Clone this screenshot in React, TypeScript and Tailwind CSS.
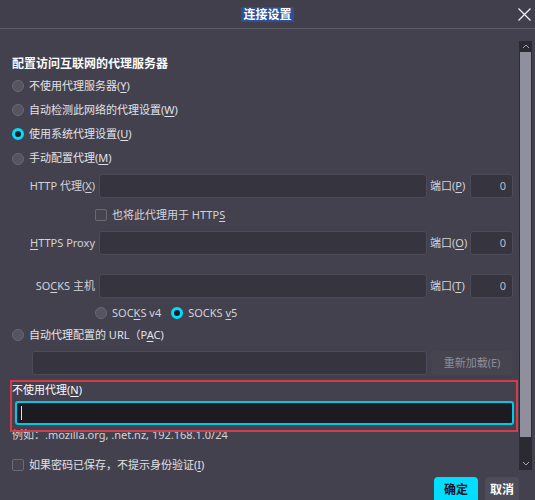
import type { ReactNode } from "react";

const font = { fontFamily: '"Noto Sans", "Noto Sans CJK SC", sans-serif' };

function Radio({ checked = false }: { checked?: boolean }) {
	return checked ? (
		<span className="w-[12px] h-[12px] shrink-0 rounded-full border-[3px] border-[#00ddff] bg-[#1c1b22]" />
	) : (
		<span className="w-[12px] h-[12px] shrink-0 rounded-full border border-[#6a6975] bg-[#55545f]" />
	);
}

function Checkbox() {
	return <span className="w-[12px] h-[12px] shrink-0 rounded-[2px] border border-[#6a6975] bg-[#45444f]" />;
}

function Key({ children }: { children: ReactNode }) {
	return <span className="underline underline-offset-2">{children}</span>;
}

function Field({ className = "", value }: { className?: string; value?: string }) {
	return (
		<div className={`h-[24px] shrink-0 rounded-[3px] border border-[#4c4b57] bg-[#35343f] flex items-center justify-end pr-[6px] text-[11px] text-[#bdbcc4] ${className}`}>
			{value}
		</div>
	);
}

function ProxyRow({ label, port, inputClass = "w-[328px]" }: { label: ReactNode; port: ReactNode; inputClass?: string }) {
	return (
		<div className="flex items-center h-[24px]">
			<div className="w-[99px] shrink-0 pr-[4px] text-right text-[11px] text-[#d4d3da]">{label}</div>
			<Field className={inputClass} />
			<div className="w-[43px] shrink-0 pl-[3px] text-[11px] text-[#d4d3da] whitespace-nowrap">{port}</div>
			<Field className="w-[43px]" value="0" />
		</div>
	);
}

export default function App() {
	return (
		<div className="w-[535px] h-[500px] bg-[#42414d] overflow-hidden flex flex-col text-[#e2e1e8]" style={font}>
			{/* Title bar */}
			<div className="relative h-[29px] shrink-0 flex items-center justify-center border-b border-[#5c5b67] bg-[#403f4b]">
				<span className="px-[2px] bg-[#2a4f9c] text-[12px] font-bold leading-[15px] text-white">连接设置</span>
				<svg className="absolute right-[3px] top-[7px]" width="15" height="15" viewBox="0 0 15 15">
					<path d="M1.5 1.5 L13.5 13.5 M13.5 1.5 L1.5 13.5" stroke="#f0f0f4" strokeWidth="1.3" fill="none" />
				</svg>
			</div>

			{/* Scrollable body */}
			<div className="flex h-[443px] shrink-0">
				<div className="relative w-[519px] shrink-0">
					<div className="mt-[27px] ml-[12px] h-[16px] leading-[16px] text-[12px] font-bold text-[#fbfbfe]">配置访问互联网的代理服务器</div>

					<div className="mt-[2px] flex flex-col text-[11px]">
						<label className="h-[24px] flex items-center gap-[5px] pl-[12px]">
							<Radio />
							<span>不使用代理服务器(<Key>Y</Key>)</span>
						</label>
						<label className="h-[24px] flex items-center gap-[5px] pl-[12px]">
							<Radio />
							<span>自动检测此网络的代理设置(<Key>W</Key>)</span>
						</label>
						<label className="h-[24px] flex items-center gap-[5px] pl-[12px]">
							<Radio checked />
							<span>使用系统代理设置(<Key>U</Key>)</span>
						</label>
						<label className="h-[25px] flex items-center gap-[5px] pl-[12px]">
							<Radio />
							<span>手动配置代理(<Key>M</Key>)</span>
						</label>
					</div>

					<div className="mt-[3px]">
						<ProxyRow
							label={<>HTTP 代理(<Key>X</Key>)</>}
							port={<>端口(<Key>P</Key>)</>}
						/>
					</div>

					<div className="mt-[5px] h-[24px] flex items-center gap-[5px] pl-[95px] text-[11px] text-[#d4d3da]">
						<Checkbox />
						<span>也将此代理用于 HTTP<Key>S</Key></span>
					</div>

					<div className="mt-[4px]">
						<ProxyRow
							label={<><Key>H</Key>TTPS Proxy</>}
							port={<>端口(<Key>O</Key>)</>}
						/>
					</div>

					<div className="mt-[19px]">
						<ProxyRow
							label={<>SO<Key>C</Key>KS 主机</>}
							port={<>端口(<Key>T</Key>)</>}
						/>
					</div>

					<div className="mt-[4px] h-[22px] flex items-center pl-[95px] text-[11px] text-[#d4d3da]">
						<Radio />
						<span className="ml-[5px]">SOC<Key>K</Key>S v4</span>
						<span className="ml-[10px] flex items-center"><Radio checked /></span>
						<span className="ml-[5px]">SOCKS <Key>v</Key>5</span>
					</div>

					<label className="h-[22px] flex items-center gap-[5px] pl-[12px] text-[11px]">
						<Radio />
						<span>自动代理配置的 URL（P<Key>A</Key>C)</span>
					</label>

					<div className="mt-[5px] flex items-center h-[24px] pl-[32px]">
						<Field className="w-[395px]" />
						<div className="ml-[4px] w-[82px] h-[24px] rounded-[3px] bg-[#45444f] flex items-center justify-center text-[11px] text-[#8f8e98]">
							重新加载(E)
						</div>
					</div>

					<div className="mt-[7px] pl-[12px] h-[16px] leading-[16px] text-[11px] text-[#fbfbfe]">不使用代理(<Key>N</Key>)</div>
					<div className="mt-[3px] ml-[15px] w-[499px] h-[24px] rounded-[3px] border-2 border-[#00c8e6] bg-[#1c1b22] flex items-center pl-[4px]">
						<span className="w-px h-[14px] bg-[#e0e0e6]" />
					</div>
					<div className="mt-[2px] pl-[12px] h-[16px] leading-[16px] text-[11px] text-[#d4d3da]">例如：.mozilla.org, .net.nz, 192.168.1.0/24</div>

					<div className="mt-[10px] h-[24px] flex items-center gap-[5px] pl-[12px] text-[11px]">
						<Checkbox />
						<span>如果密码已保存，不提示身份验证(<Key>I</Key>)</span>
					</div>

					{/* annotation box */}
					<div className="absolute left-[10px] top-[351px] w-[508px] h-[52px] border-2 border-[#d83a48] pointer-events-none" />
				</div>

				{/* Scrollbar */}
				<div className="mt-[12px] w-[13px] h-[429px] bg-[#2b2a33] flex flex-col items-center">
					<div className="h-[11px] flex items-center justify-center">
						<svg width="8" height="5" viewBox="0 0 8 5">
							<path d="M1 4 L4 1 L7 4" stroke="#a9a8b2" strokeWidth="1" fill="none" />
						</svg>
					</div>
					<div className="w-[11px] h-[385px] bg-[#8f8f9d]" />
					<div className="flex-1" />
					<div className="h-[14px] flex items-center justify-center">
						<svg width="8" height="5" viewBox="0 0 8 5">
							<path d="M1 1 L4 4 L7 1" stroke="#a9a8b2" strokeWidth="1" fill="none" />
						</svg>
					</div>
				</div>
			</div>

			{/* Footer */}
			<div className="flex justify-end gap-[7px] pr-[16px] pt-[5px]">
				<button className="w-[44px] h-[26px] rounded-[4px] bg-[#00ddff] text-[12px] font-bold text-[#15141a]">确定</button>
				<button className="w-[34px] h-[26px] rounded-[4px] bg-[#4d4c58] text-[12px] font-bold text-[#fbfbfe]">取消</button>
			</div>
		</div>
	);
}
